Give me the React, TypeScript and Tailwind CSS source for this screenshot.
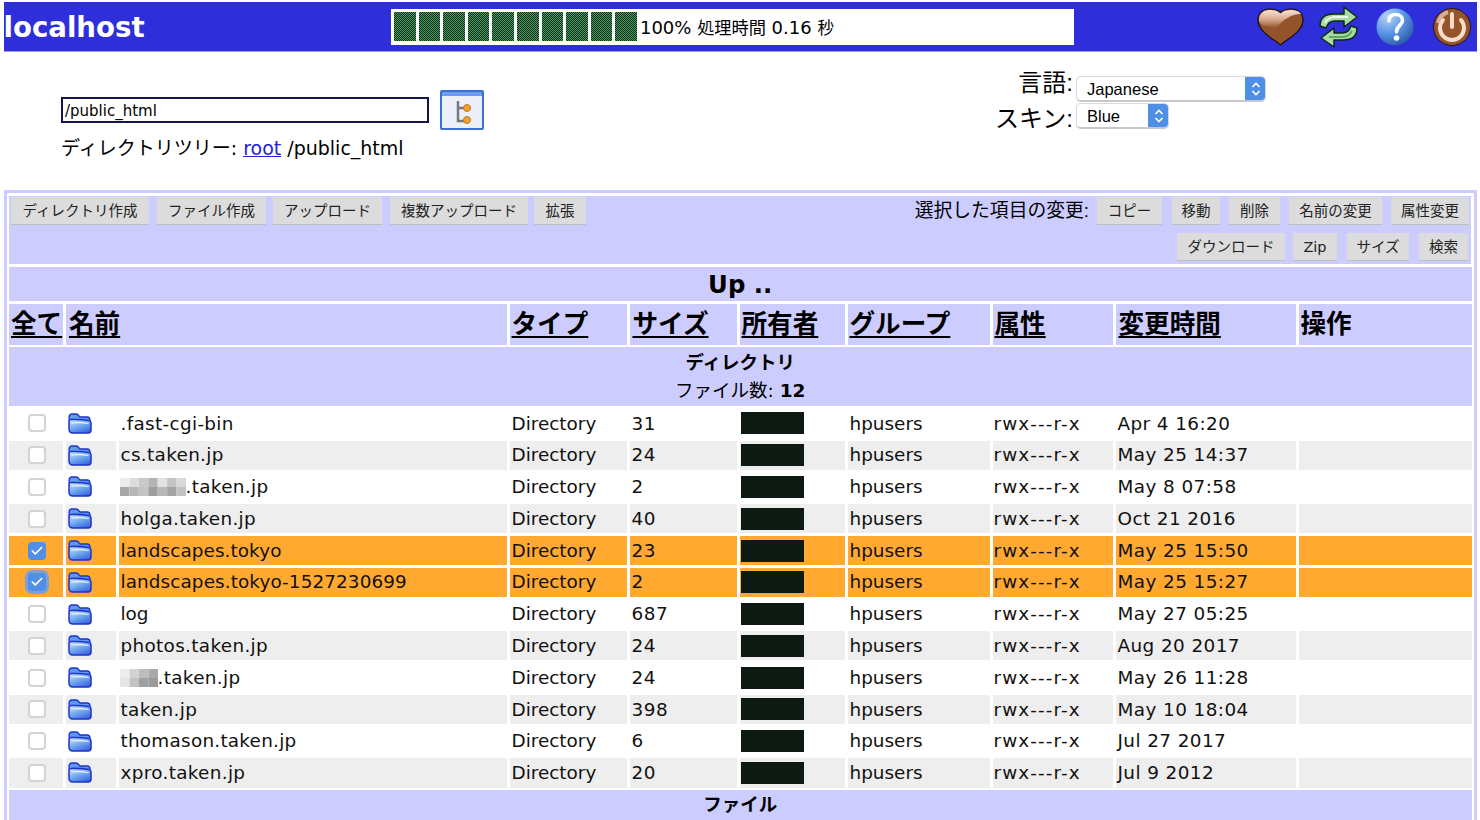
import React from "react";
import { Check } from "lucide-react";

const T = "tracking-[0.33px]";
const rows = [
  { name: ".fast-cgi-bin", size: "31", time: "Apr 4 16:20", t: T },
  { name: "cs.taken.jp", size: "24", time: "May 25 14:37", t: T },
  { name: ".taken.jp", size: "2", time: "May 8 07:58", blur: "long", t: T },
  { name: "holga.taken.jp", size: "40", time: "Oct 21 2016", t: T },
  { name: "landscapes.tokyo", size: "23", time: "May 25 15:50", sel: true, t: "tracking-[0.08px]" },
  { name: "landscapes.tokyo-1527230699", size: "2", time: "May 25 15:27", sel: true, focus: true, t: "tracking-[0.1px]" },
  { name: "log", size: "687", time: "May 27 05:25", t: "" },
  { name: "photos.taken.jp", size: "24", time: "Aug 20 2017", t: T },
  { name: ".taken.jp", size: "24", time: "May 26 11:28", blur: "short", t: T },
  { name: "taken.jp", size: "398", time: "May 10 18:04", t: T },
  { name: "thomason.taken.jp", size: "6", time: "Jul 27 2017", t: "tracking-[0.25px]" },
  { name: "xpro.taken.jp", size: "20", time: "Jul 9 2012", t: T },
];

function Folder() {
  return (
    <svg width="24" height="21" viewBox="0 0 24 21">
      <defs>
        <linearGradient id="fo" x1="0.1" y1="0" x2="0.7" y2="1">
          <stop offset="0" stopColor="#cfe3fa" />
          <stop offset="0.55" stopColor="#6ea6ee" />
          <stop offset="1" stopColor="#3a68e2" />
        </linearGradient>
      </defs>
      <path d="M1 5 Q1 1 4 1 H8 Q10 1 11 3 L12 4 H19 Q22 4 22 7 V9 H2 Z" fill="#5f9bea" stroke="#1f33c8" strokeWidth="1.3" />
      <path d="M1 8 Q1 6.5 3 6.5 Q12 6 21 7.5 Q23 8 23 10 V17 Q23 20 20 20 H5 Q1 20 1 16 Z" fill="url(#fo)" stroke="#1f33c8" strokeWidth="1.5" />
      <path d="M3.5 10 Q12 9 20.5 10.5" stroke="#eaf3fd" strokeWidth="1.2" fill="none" />
    </svg>
  );
}

function Mosaic({ kind }: { kind: string }) {
  const top = kind === "long"
    ? ["#ececec", "#dcdcdc", "#c9c9c9", "#b4b4b4", "#e2e2e2", "#c4c4c4", "#d8d8d8"]
    : ["#ededed", "#d4d4d4", "#bcbcbc", "#a9a9a9"];
  const bottom = kind === "long"
    ? ["#a8a8a8", "#b6b6b6", "#c4c4c4", "#9e9e9e", "#b8b8b8", "#a3a3a3", "#c2c2c2"]
    : ["#e6e6e6", "#c2c2c2", "#a0a0a0", "#9a9a9a"];
  const w = kind === "long" ? 66 : 38;
  const c = w / top.length;
  return (
    <svg width={w} height="18" className="inline-block -ml-px">
      {top.map((f, i) => <rect key={i} x={i * c} y="0" width={c} height="9" fill={f} />)}
      {bottom.map((f, i) => <rect key={i} x={i * c} y="9" width={c} height="9" fill={f} />)}
    </svg>
  );
}

function Heart() {
  return (
    <svg width="47" height="38" viewBox="0 0 47 38">
      <defs>
        <linearGradient id="hg" x1="0" y1="0" x2="0" y2="1">
          <stop offset="0" stopColor="#fbe3d6" />
          <stop offset="0.55" stopColor="#d6a88b" />
          <stop offset="1" stopColor="#9a5c34" />
        </linearGradient>
      </defs>
      <path d="M23.5 37 C15 30 1 23 1 12 C1 5 6 1 13 1 C17 1 21 2 23.5 4.5 C26 2 30 1 34 1 C41 1 46 5 46 12 C46 23 32 30 23.5 37 Z" fill="#93542b" stroke="#1b0f08" strokeWidth="1.2" />
      <path d="M2 12 C2 5 7 2 13 2 C17 2 21 3 23.5 5.5 C26 3 30 2 34 2 C38 2 42 3 44 6 C34 6 26 12 20 19 C11 20 3 18 2 12 Z" fill="url(#hg)" />
    </svg>
  );
}

function Sync() {
  return (
    <svg width="41" height="44" viewBox="0 0 41 44">
      <path d="M2 21 C2 12 8 9 16 9 H26 V2 L39 12 L26 22 V16 H17 C12 16 10 18 8 23 Z" fill="#a8dca4" stroke="#0c2a10" strokeWidth="1.5" strokeLinejoin="round" />
      <path d="M39 23 C39 32 33 35 25 35 H16 V42 L3 33 L16 23 V28 H24 C29 28 31 26 33 21 Z" fill="#a8dca4" stroke="#0c2a10" strokeWidth="1.5" strokeLinejoin="round" />
      <path d="M7 18 C9 14 12 12 17 12 H30" stroke="#eaf8e6" strokeWidth="2" fill="none" />
      <path d="M34 26 C32 30 29 32 24 32 H11" stroke="#5fa860" strokeWidth="2" fill="none" />
    </svg>
  );
}

function Help() {
  return (
    <svg width="38" height="38" viewBox="0 0 38 38">
      <defs>
        <radialGradient id="he" cx="0.3" cy="0.22" r="0.9">
          <stop offset="0" stopColor="#b9d3f7" />
          <stop offset="0.5" stopColor="#5a97e6" />
          <stop offset="1" stopColor="#23509f" />
        </radialGradient>
      </defs>
      <circle cx="19" cy="19" r="18.5" fill="url(#he)" />
      <path d="M13 13 C13 8 16.5 6.5 19.5 6.5 C24 6.5 26.5 9.5 26.5 12.5 C26.5 17 20.5 17.5 20.5 24" fill="none" stroke="#ffffff" strokeWidth="3.6" strokeLinecap="round" />
      <circle cx="20.5" cy="30" r="2.8" fill="#ffffff" />
    </svg>
  );
}

function Power() {
  return (
    <svg width="38" height="38" viewBox="0 0 38 38">
      <circle cx="19" cy="19" r="18.5" fill="#94552b" stroke="#2a1508" strokeWidth="1" />
      <path d="M10 12 A12 12 0 1 0 28 12" fill="none" stroke="#f7dccb" strokeWidth="4" strokeLinecap="round" />
      <path d="M19 6 V19" stroke="#f7dccb" strokeWidth="4" strokeLinecap="round" />
      <path d="M5 15 A15 15 0 0 1 15 4" fill="none" stroke="#f3cdb8" strokeWidth="4" opacity="0.75" />
    </svg>
  );
}

function TreeButton() {
  return (
    <div className="w-[44px] h-[40px] border-2 border-[#3b6fd8] rounded-[2px] bg-[#eceef8] flex flex-col">
      <div className="h-[4px] bg-[#6f9bec]" />
      <div className="flex-1 flex items-center justify-center">
        <svg width="24" height="26" viewBox="0 0 24 26">
          <path d="M8 2 V22 H15 M8 9 H15" fill="none" stroke="#77777f" strokeWidth="2.5" />
          <circle cx="17" cy="9" r="3.5" fill="#f0a030" stroke="#c77a10" />
          <circle cx="17" cy="21" r="3.5" fill="#f0a030" stroke="#c77a10" />
        </svg>
      </div>
    </div>
  );
}

function Select({ label, width }: { label: string; width: string }) {
  return (
    <div className={`${width} h-[26px] flex rounded-[5px] border border-[#d8d8dc] border-b-2 border-b-[#c8c8cc] bg-white overflow-hidden`}>
      <span className="flex-1 pl-[10px] text-[16.5px] leading-[24px]">{label}</span>
      <span className="w-[21px] -my-px -mr-px bg-[#4f8fe6] flex items-center justify-center">
        <svg width="12" height="18" viewBox="0 0 12 18">
          <path d="M2.5 7 L6 3.5 L9.5 7 M2.5 11 L6 14.5 L9.5 11" fill="none" stroke="#fff" strokeWidth="1.6" />
        </svg>
      </span>
    </div>
  );
}

function Btn({ w, children }: { w: string; children: React.ReactNode }) {
  return (
    <button className={`${w} h-[28px] shrink-0 bg-[#dcdcdc] border-b border-b-[#bdbdbd] text-[14.5px] leading-[26px] text-[#222] text-center whitespace-nowrap ${DJ}`}>
      {children}
    </button>
  );
}

function Cell({ bg, className, children }: { bg: string; className?: string; children?: React.ReactNode }) {
  return <div className={`h-[29.2px] flex items-center ${bg} ${className ?? ""}`}>{children}</div>;
}

const CJK = "font-['Liberation_Sans','Noto_Sans_CJK_JP',sans-serif]";
const DJ = "font-['DejaVu_Sans','Noto_Sans_CJK_JP',sans-serif]";
const HCELL = `h-[41px] bg-[#ccccff] flex items-center pl-[2px] text-[25.6px] font-bold ${CJK}`;
const HLINK = "underline underline-offset-[3px] decoration-[1.5px]";

export default function App() {
  return (
    <div className={`h-screen w-full overflow-hidden bg-white text-black ${DJ}`}>
      <header className="mt-[2px] mx-[3.5px] h-[50px] bg-[#2e2edb] border-b border-b-[#9a9af0] flex items-center justify-between">
        <div className="w-[387.5px] shrink-0 text-white font-bold text-[27.6px] leading-none pt-[2px]">localhost</div>
        <div className="w-[683px] shrink-0 h-[36px] bg-white flex items-center pl-[3px]">
          <div className="flex gap-[3px]">
            {Array.from({ length: 10 }).map((_, i) => (
              <div key={i} className="w-[21.6px] h-[29px] bg-[repeating-conic-gradient(#0d3018_0_25%,#4f9a63_0_50%)] bg-[length:2px_2px]" />
            ))}
          </div>
          <span className="ml-[3px] pt-[3px] text-[18px] whitespace-nowrap">
            100% <span className="text-[17.2px]">処理時間</span> 0.16 <span className="text-[16.5px]">秒</span>
          </span>
        </div>
        <div className="flex-1 flex items-center justify-end pr-[6px]">
          <Heart />
          <span className="ml-[14px]"><Sync /></span>
          <span className="ml-[17px]"><Help /></span>
          <span className="ml-[19px]"><Power /></span>
        </div>
      </header>

      <section className="h-[138px] flex justify-between">
        <div className="pl-[61px] pt-[38px]">
          <div className="flex items-center gap-[11px]">
            <div className="w-[368px] h-[26px] bg-white border-2 border-[#15154a] text-[15px] leading-[24px] pl-[2px]">/public_html</div>
            <TreeButton />
          </div>
          <div className="mt-[3px] text-[19px] leading-[30px] whitespace-nowrap">
            ディレクトリツリー: <a href="#" className="text-[#2222dd] underline">root</a> /public_html
          </div>
        </div>
        <div className={`pr-[214px] pt-[24px] ${CJK}`}>
          <div className="grid grid-cols-[auto_190px] gap-x-[3px] gap-y-[1px] items-center">
            <span className="text-[24px] leading-[26px] whitespace-nowrap text-right -translate-y-[6px]">言語:</span>
            <Select label="Japanese" width="w-[190px]" />
            <span className="text-[24px] leading-[26px] whitespace-nowrap text-right translate-y-[3px]">スキン:</span>
            <Select label="Blue" width="w-[93px]" />
          </div>
        </div>
      </section>

      <main className="mx-[3.5px] border-[3px] border-b-0 border-[#ccccff] pt-[3px] px-[2.5px] h-[630px] overflow-hidden">
        <div className="h-[68px] bg-[#ccccff] flex justify-between pl-[2px] pr-[2px] pt-[1px]">
          <div className="flex gap-[8px] items-start">
            <Btn w="w-[138px]">ディレクトリ作成</Btn>
            <Btn w="w-[109px]">ファイル作成</Btn>
            <Btn w="w-[109px] -ml-px">アップロード</Btn>
            <Btn w="w-[138px]">複数アップロード</Btn>
            <Btn w="w-[52px] -ml-[2px]">拡張</Btn>
          </div>
          <div className="flex flex-col items-end gap-[8px]">
            <div className="flex items-center gap-[9px]">
              <span className={`text-[18.8px] -mr-px whitespace-nowrap ${CJK}`}>選択した項目の変更:</span>
              <Btn w="w-[65px] mr-px">コピー</Btn>
              <Btn w="w-[48px]">移動</Btn>
              <Btn w="w-[51px]">削除</Btn>
              <Btn w="w-[93px]">名前の変更</Btn>
              <Btn w="w-[78px]">属性変更</Btn>
            </div>
            <div className="flex items-center gap-[8px] pr-px">
              <Btn w="w-[108px]">ダウンロード</Btn>
              <Btn w="w-[44px]">Zip</Btn>
              <Btn w="w-[62px] ml-[2px]">サイズ</Btn>
              <Btn w="w-[49px] ml-[2px]">検索</Btn>
            </div>
          </div>
        </div>

        <div className="mt-[3px] grid grid-cols-[54px_49.5px_388px_117px_107px_105px_142px_120px_180px_173px] gap-x-[3px] gap-y-[2.6px]">
          <div className="col-span-full h-[34px] bg-[#ccccff] flex items-center justify-center pt-[3px] text-[24.4px] font-bold">Up ..</div>

          <div className={HCELL}><a className={HLINK}>全て</a></div>
          <div className={`${HCELL} col-span-2 pl-[3px]`}><a className={HLINK}>名前</a></div>
          <div className={HCELL}><a className={HLINK}>タイプ</a></div>
          <div className={`${HCELL} pl-[3px]`}><a className={HLINK}>サイズ</a></div>
          <div className={HCELL}><a className={HLINK}>所有者</a></div>
          <div className={HCELL}><a className={HLINK}>グループ</a></div>
          <div className={`${HCELL} pl-[1px]`}><a className={HLINK}>属性</a></div>
          <div className={`${HCELL} pl-[3px]`}><a className={HLINK}>変更時間</a></div>
          <div className={HCELL}>操作</div>

          <div className="col-span-full h-[59px] bg-[#ccccff] flex flex-col items-center justify-center text-[18.5px] leading-[28px]">
            <b>ディレクトリ</b>
            <span>ファイル数: <b>12</b></span>
          </div>

          {rows.map((r, i) => {
            const bg = r.sel ? "bg-[#ffa930]" : i % 2 === 1 ? "bg-[#eeeeee]" : "bg-white";
            const text = "text-[18.4px] pl-[2px] whitespace-nowrap text-[#111]";
            return (
              <React.Fragment key={i}>
                <Cell bg={bg} className="justify-center pl-[1px]">
                  {r.sel ? (
                    <span className={`w-[18px] h-[18px] rounded-[4px] bg-[#4f8fe6] flex items-center justify-center ${r.focus ? "ring-[3px] ring-[#7f9fd8]" : ""}`}>
                      <Check size={14} color="#fff" strokeWidth={3} />
                    </span>
                  ) : (
                    <span className="w-[18px] h-[18px] rounded-[4px] bg-white border-2 border-[#d2d2d8]" />
                  )}
                </Cell>
                <Cell bg={bg} className="pl-[2px]"><Folder /></Cell>
                <Cell bg={bg} className={`${text} ${r.t}`}>
                  {r.blur ? <Mosaic kind={r.blur} /> : null}
                  {r.name}
                </Cell>
                <Cell bg={bg} className={text}>Directory</Cell>
                <Cell bg={bg} className={`${text} tracking-[0.5px]`}>{r.size}</Cell>
                <Cell bg={bg} className="pl-[1px]"><span className="w-[63px] h-[22px] bg-[#0c1a12]" /></Cell>
                <Cell bg={bg} className={text}>hpusers</Cell>
                <Cell bg={bg} className={`${text} !pl-[1px] tracking-[1.1px]`}>rwx---r-x</Cell>
                <Cell bg={bg} className={`${text} tracking-[0.42px]`}>{r.time}</Cell>
                <Cell bg={bg} />
              </React.Fragment>
            );
          })}

          <div className="col-span-full h-[40px] bg-[#ccccff] flex justify-center pt-[3px] text-[18.5px] leading-[24px] font-bold">ファイル</div>
        </div>
      </main>
    </div>
  );
}
